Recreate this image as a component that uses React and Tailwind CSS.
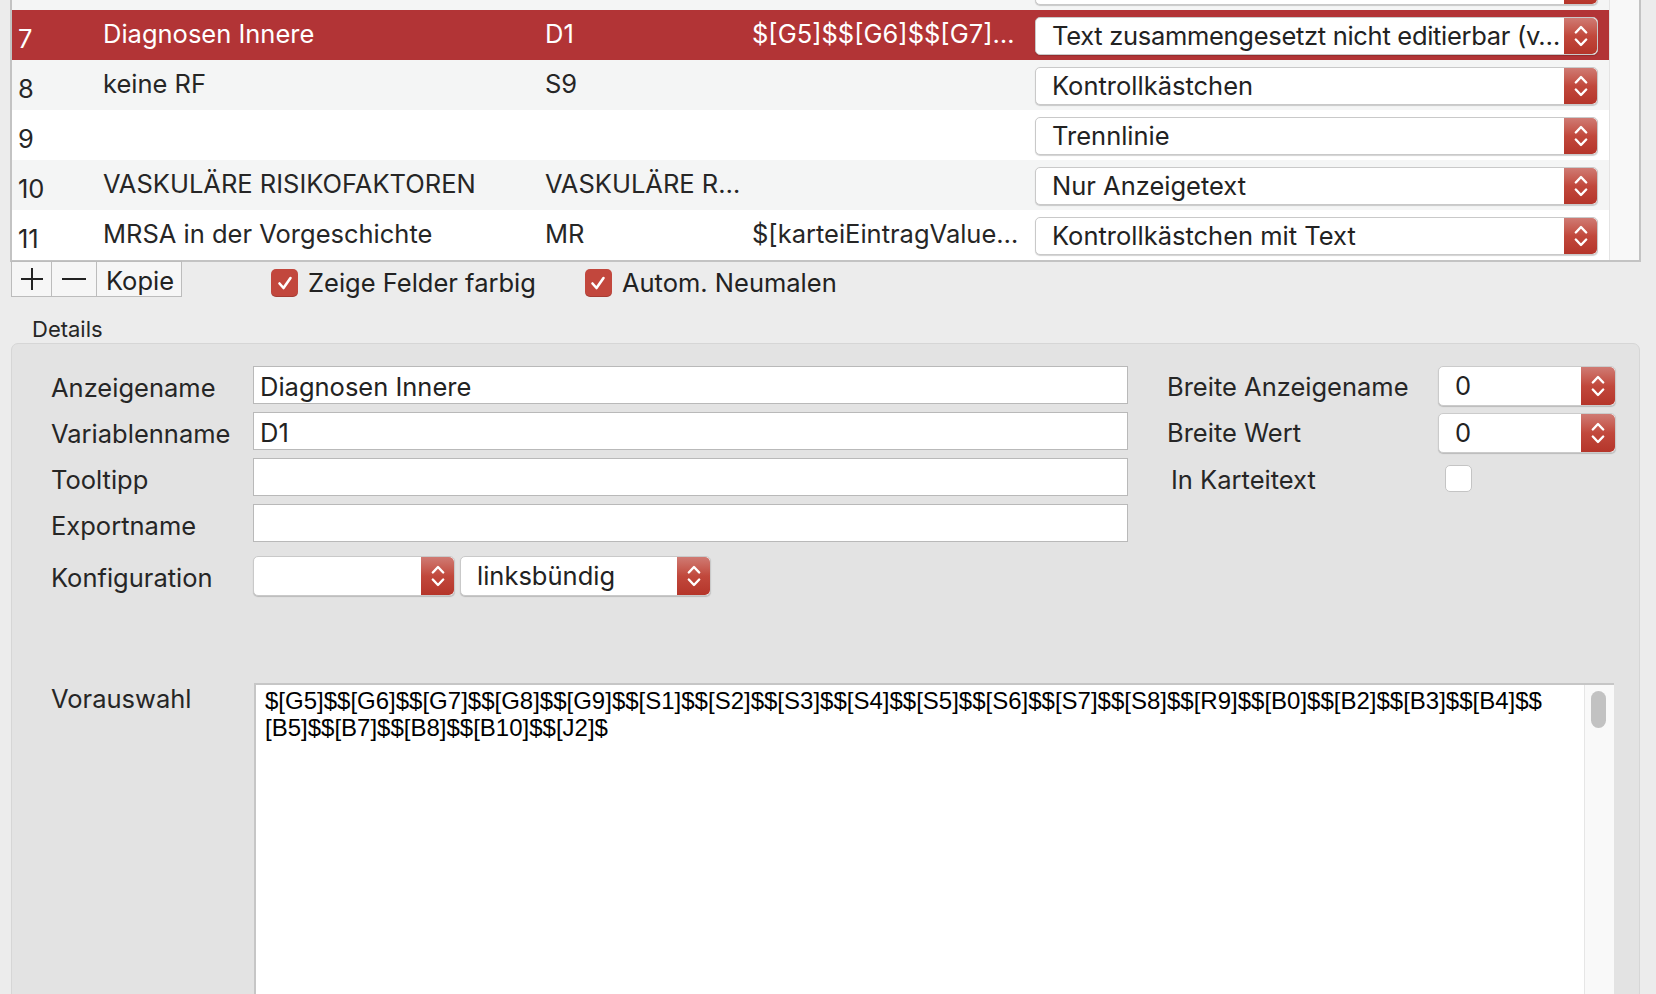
import React from "react";

const ui = { fontFamily: "Inter, 'Noto Sans', sans-serif" };
const mono = { fontFamily: "'Liberation Sans', Arial, sans-serif" };

const Chevrons = ({ h = 38 }) => (
  <svg width="14" height={h} viewBox="0 0 14 38" fill="none" stroke="white" strokeWidth="2.4" strokeLinecap="round" strokeLinejoin="round">
    <path d="M1.8 15.5 L7 10 L12.2 15.5" />
    <path d="M1.8 22.5 L7 28 L12.2 22.5" />
  </svg>
);

const StepBtn = ({ w = "w-[33px]" }) => (
  <div className={`${w} h-full shrink-0 flex items-center justify-center rounded-r-[5px] bg-gradient-to-b from-[#cf7a73] via-[#c1483c] to-[#b5352a]`}>
    <Chevrons />
  </div>
);

const Popup = ({ text, className = "", tight }) => (
  <div className={`flex h-[38px] bg-white rounded-[5px] border border-[#c9c9c9] shadow-[0_1px_1px_rgba(0,0,0,0.18)] overflow-hidden ${className}`}>
    <div className={`flex-1 min-w-0 pl-[16px] pr-1 flex items-center text-[25.5px] leading-[30px] text-[#222] whitespace-nowrap overflow-hidden ${tight ? "tracking-[-0.3px]" : ""}`}>
      {text}
    </div>
    <StepBtn />
  </div>
);

const Check = ({ on }) =>
  on ? (
    <div className="w-[27px] h-[28px] rounded-[5px] bg-[#c2473d] flex items-center justify-center shadow-[inset_0_-1px_0_rgba(0,0,0,0.15)]">
      <svg width="20" height="20" viewBox="0 0 20 20" fill="none" stroke="white" strokeWidth="2.6" strokeLinecap="round" strokeLinejoin="round">
        <path d="M4.5 10.5 L8.5 15 L15.5 5" />
      </svg>
    </div>
  ) : (
    <div className="w-[27px] h-[27px] rounded-[5px] bg-white border border-[#c4c4c4]" />
  );

// row 6 is scrolled out of view, only its popup's lower edge shows
const rows = [
  { n: "", name: "", v: "", val: "", type: "", bg: "bg-[#f4f5f5]", id: "6" },
  { n: "7", name: "Diagnosen Innere", v: "D1", val: "$[G5]$$[G6]$$[G7]…", type: "Text zusammengesetzt nicht editierbar (v…", sel: true, tight: true },
  { n: "8", name: "keine RF", v: "S9", val: "", type: "Kontrollkästchen", bg: "bg-[#f4f5f5]" },
  { n: "9", name: "", v: "", val: "", type: "Trennlinie", bg: "bg-white" },
  { n: "10", name: "VASKULÄRE RISIKOFAKTOREN", v: "VASKULÄRE R…", val: "", type: "Nur Anzeigetext", bg: "bg-[#f4f5f5]" },
  { n: "11", name: "MRSA in der Vorgeschichte", v: "MR", val: "$[karteiEintragValue…", type: "Kontrollkästchen mit Text", bg: "bg-white" },
];

const Row = ({ r }) => (
  <div className={`flex h-[50px] text-[25.5px] leading-[30px] whitespace-nowrap ${r.sel ? "bg-[#b23436] text-white" : `${r.bg} text-[#262626]`}`}>
    <div className="w-[91px] pl-[6px] pt-[14px]">{r.n}</div>
    <div className="w-[442px] pt-[9px]">{r.name}</div>
    <div className="w-[207px] pt-[9px]">{r.v}</div>
    <div className="w-[283px] pt-[9px] overflow-hidden">{r.val}</div>
    <div className="w-[563px] pt-[7px]">
      <Popup text={r.type} tight={r.tight} />
    </div>
  </div>
);

const Field = ({ value = "" }) => (
  <div className="h-[38px] w-[875px] bg-white border border-[#b9b9b9] flex items-center pl-[6px] pt-[3px] text-[25.5px] leading-[30px] text-[#222]">
    {value}
  </div>
);

const Label = ({ children, className = "" }) => (
  <div className={`text-[25.5px] leading-[30px] text-[#262626] ${className}`}>{children}</div>
);

const NumStep = () => (
  <div className="flex h-[40px] w-[178px] bg-white rounded-[5px] border border-[#cbcbcb] shadow-[0_1px_1px_rgba(0,0,0,0.18)] overflow-hidden">
    <div className="flex-1 pl-[16px] flex items-center text-[25.5px] text-[#222]">0</div>
    <StepBtn w="w-[34px]" />
  </div>
);

export default function App() {
  return (
    <div className="w-[1656px] h-[994px] overflow-hidden bg-[#ececec]" style={ui}>
      {/* table */}
      <div className="ml-[10px] w-[1631px] h-[262px] border-x-2 border-b-2 border-[#c3c3c3] bg-white flex overflow-hidden">
        <div className="flex-1 overflow-hidden">
          <div className="-mt-[40px]">
            {rows.map((r) => (
              <Row key={r.id || r.n} r={r} />
            ))}
          </div>
        </div>
        <div className="w-[30px] bg-[#f8f8f8] border-l border-[#e4e4e4]" />
      </div>

      {/* toolbar */}
      <div className="flex items-center h-[36px] -mt-[1px] text-[#222]">
        <div className="ml-[11px] flex h-[36px] border border-[#bcbcbc] bg-[#f6f6f6]">
          <div className="w-[40px] flex items-center justify-center border-r border-[#bcbcbc]">
            <svg width="22" height="22" viewBox="0 0 22 22" stroke="#222" strokeWidth="2">
              <path d="M11 0 V22 M0 11 H22" />
            </svg>
          </div>
          <div className="w-[45px] flex items-center justify-center border-r border-[#bcbcbc]">
            <svg width="24" height="4" viewBox="0 0 24 4" stroke="#222" strokeWidth="2">
              <path d="M0 2 H24" />
            </svg>
          </div>
          <div className="w-[84px] pl-[9px] pt-[3px] flex items-center text-[25.5px] leading-[30px]">Kopie</div>
        </div>
        <div className="ml-[89px] mt-[8px] flex items-center">
          <Check on />
          <span className="ml-[10px] text-[25.5px] leading-[30px]">Zeige Felder farbig</span>
        </div>
        <div className="ml-[49px] mt-[8px] flex items-center">
          <Check on />
          <span className="ml-[10px] text-[25.5px] leading-[30px]">Autom. Neumalen</span>
        </div>
      </div>

      {/* details */}
      <div className="ml-[32px] mt-[19px] text-[22px] leading-[26px] text-[#262626]">Details</div>
      <div className="ml-[11px] mt-[1px] w-[1629px] h-[700px] rounded-[7px] border border-[#d6d6d6] bg-[#e3e3e3] pl-[39px] pt-[22px]">
        <div className="flex">
          <div className="flex flex-col">
            {[
              ["Anzeigename", "Diagnosen Innere"],
              ["Variablenname", "D1"],
              ["Tooltipp", ""],
              ["Exportname", ""],
            ].map(([l, v]) => (
              <div key={l} className="flex items-center h-[38px] mb-[8px]">
                <Label className="w-[202px] pt-[6px]">{l}</Label>
                <Field value={v} />
              </div>
            ))}
            <div className="flex items-center h-[40px] mt-[6px]">
              <Label className="w-[202px] pt-[3px]">Konfiguration</Label>
              <Popup text="" className="w-[202px] !h-[40px]" />
              <Popup text="linksbündig" className="ml-[5px] w-[251px] !h-[40px]" />
            </div>
          </div>

          <div className="ml-[39px] flex flex-col">
            <div className="flex items-center h-[40px]">
              <Label className="w-[271px] pt-[2px]">Breite Anzeigename</Label>
              <NumStep />
            </div>
            <div className="flex items-center h-[40px] mt-[7px]">
              <Label className="w-[271px]">Breite Wert</Label>
              <NumStep />
            </div>
            <div className="flex items-center h-[27px] mt-[12px]">
              <Label className="w-[278px] pl-[4px] pt-[2px]">In Karteitext</Label>
              <Check />
            </div>
          </div>
        </div>

        <div className="flex mt-[87px]">
          <Label className="w-[203px] pt-[1px]">Vorauswahl</Label>
          <div className="w-[1360px] h-[400px] bg-white border-l-2 border-t-2 border-[#c6c6c6] flex">
            <div className="flex-1 pl-[9px] pt-[2px] text-[24px] leading-[27px] text-black whitespace-nowrap" style={mono}>
              $[G5]$$[G6]$$[G7]$$[G8]$$[G9]$$[S1]$$[S2]$$[S3]$$[S4]$$[S5]$$[S6]$$[S7]$$[S8]$$[R9]$$[B0]$$[B2]$$[B3]$$[B4]$$
              <br />
              [B5]$$[B7]$$[B8]$$[B10]$$[J2]$
            </div>
            <div className="w-[30px] bg-[#f9f9f9] border-l border-[#e6e6e6] pl-[6px] pt-[6px]">
              <div className="w-[15px] h-[37px] rounded-full bg-[#c2c2c2]" />
            </div>
          </div>
        </div>
      </div>
    </div>
  );
}
